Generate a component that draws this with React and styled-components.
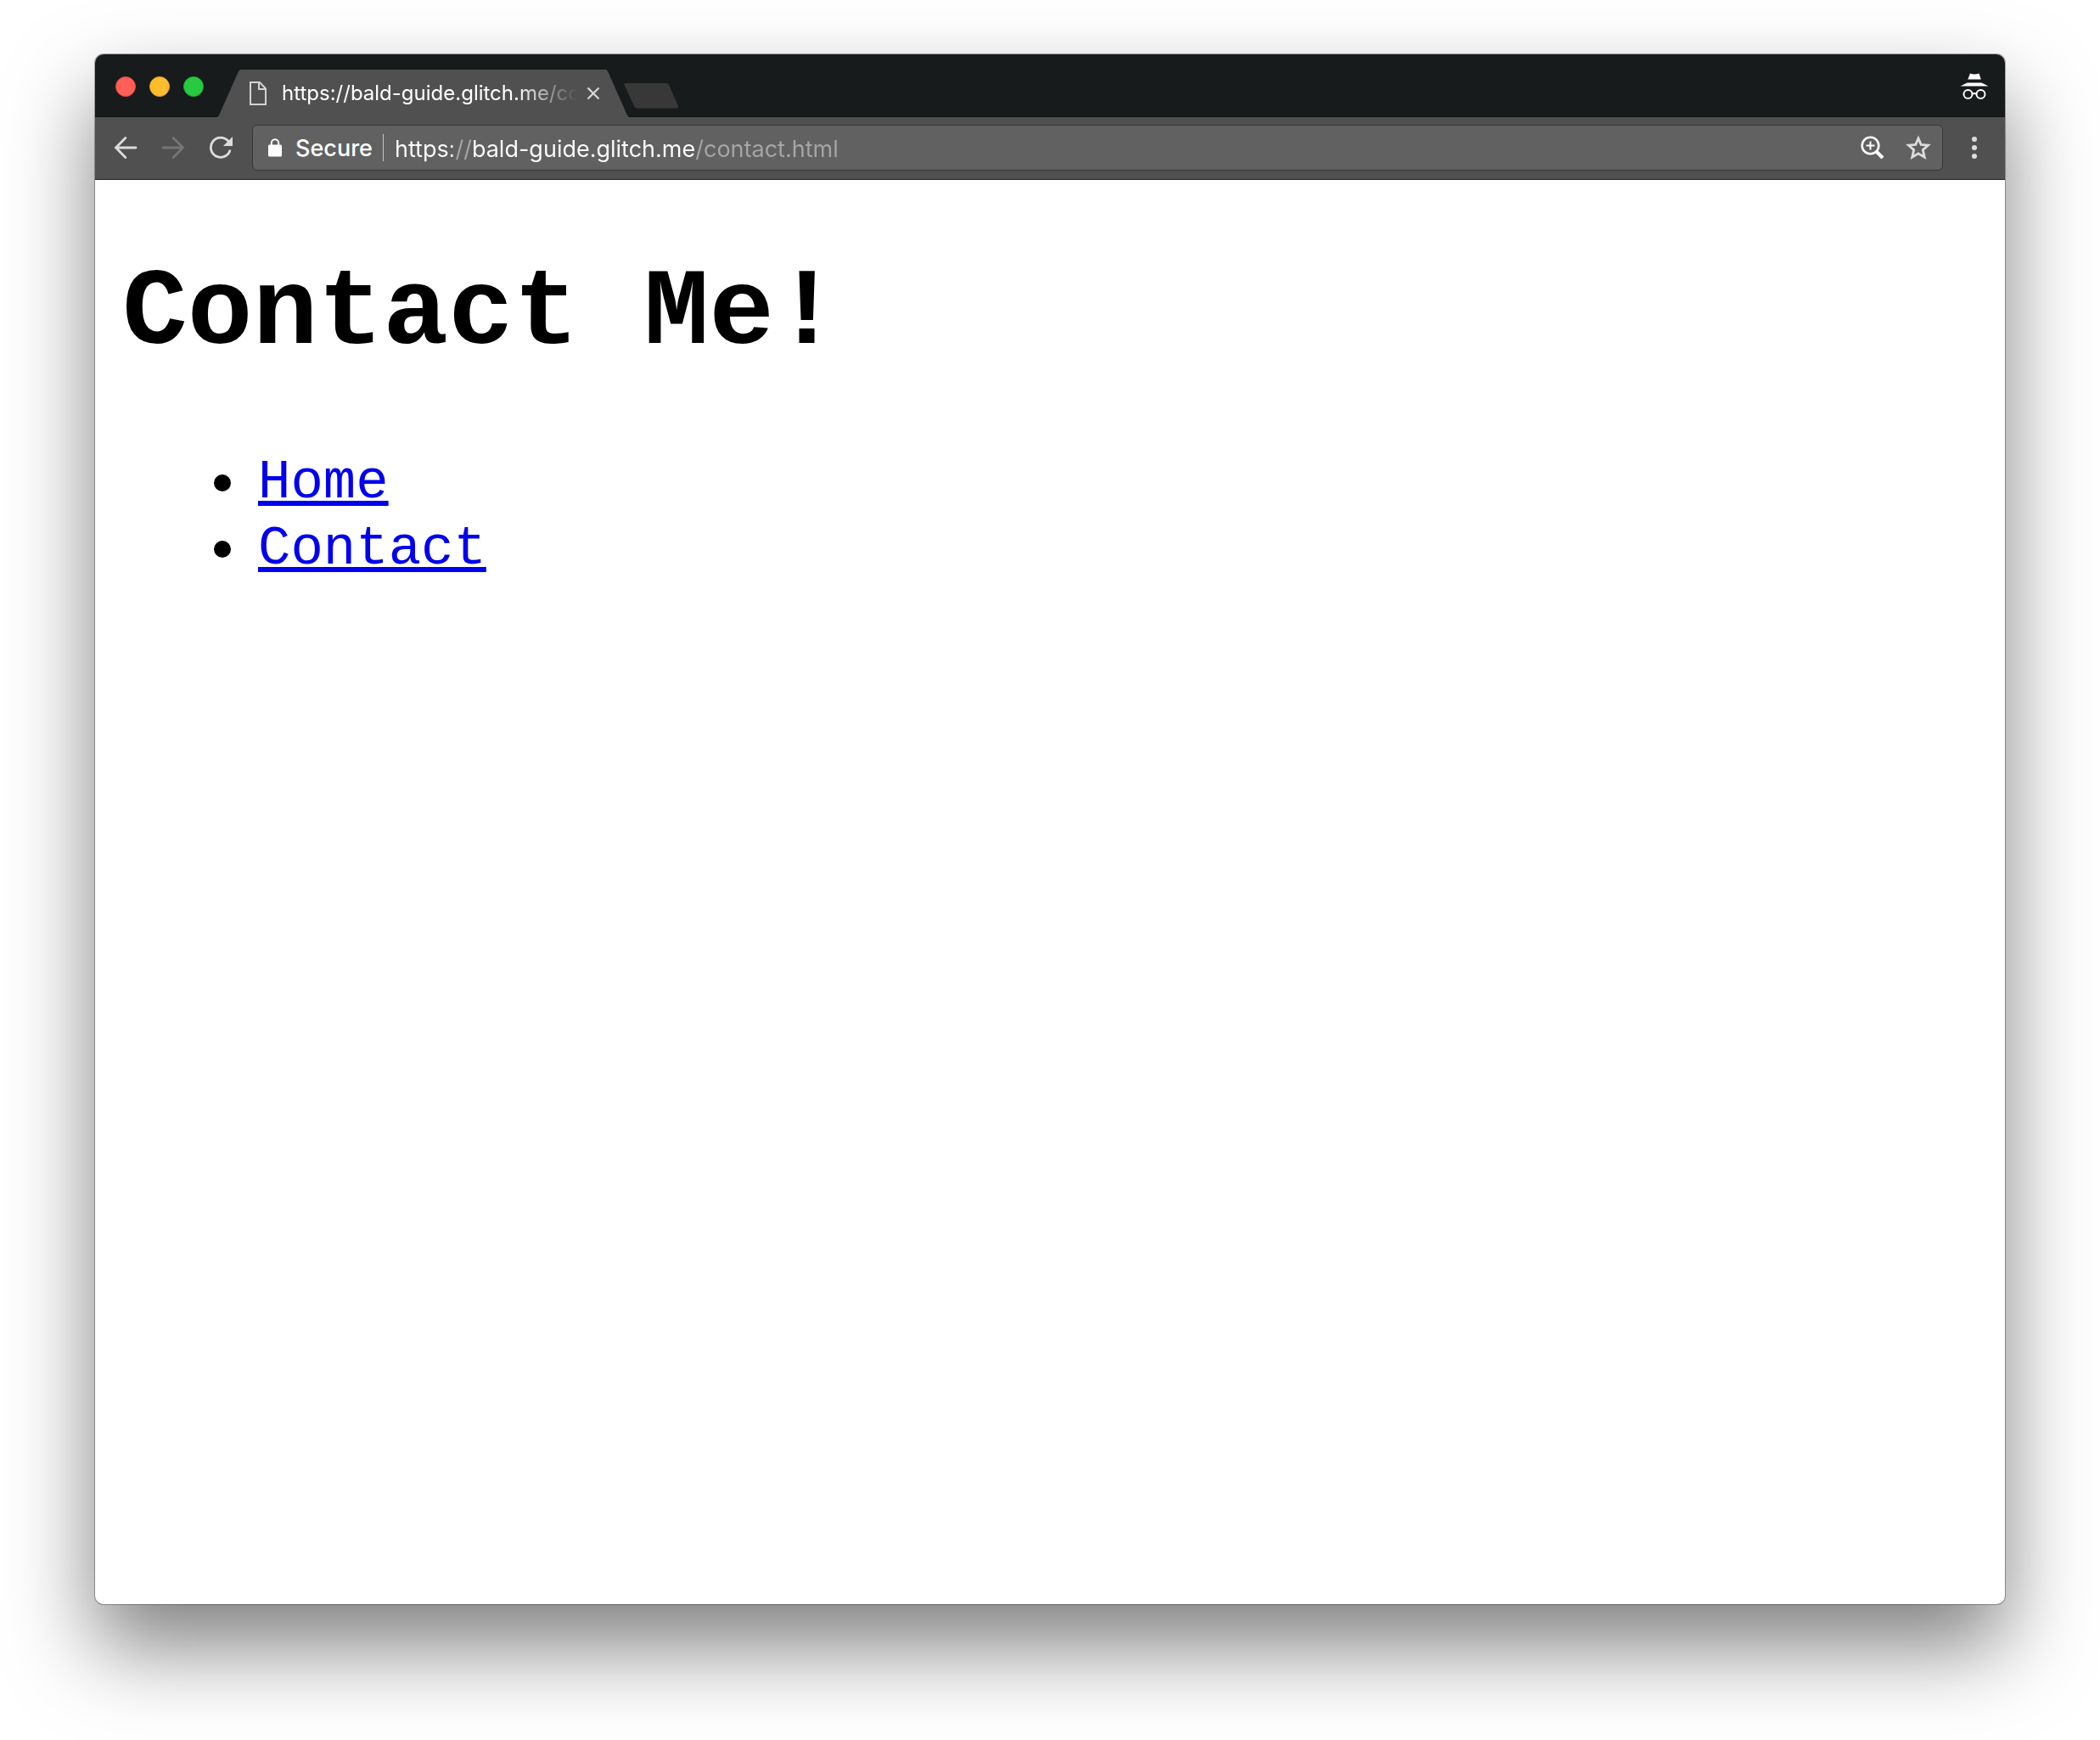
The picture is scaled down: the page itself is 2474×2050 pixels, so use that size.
import React from "react";
import styled, { createGlobalStyle } from "styled-components";

const GlobalStyle = createGlobalStyle`
  *, *::before, *::after { box-sizing: border-box; }
  body { margin: 0; background: #fff; }
`;

const uiFont = `Inter, Roboto, "Liberation Sans", sans-serif`;

const Desktop = styled.div`
  display: flex;
  min-height: 100vh;
  padding: 64px 112px 160px;
  background: #fff;
  font-family: ${uiFont};
`;

const BrowserWindow = styled.div`
  display: flex;
  flex: 1;
  flex-direction: column;
  min-width: 0;
  overflow: hidden;
  border-radius: 10px;
  background: #fff;
  box-shadow: 0 0 0 1px rgba(0, 0, 0, 0.3), 0 50px 100px rgba(0, 0, 0, 0.5);
`;

const TitleBar = styled.header`
  display: flex;
  align-items: flex-start;
  height: 74px;
  padding-right: 19px;
  background: #181b1c;
  border-bottom: 1px solid #0e1010;
`;

const WindowControls = styled.div`
  display: flex;
  gap: 16px;
  padding: 26px 28px 0 24px;
`;

const Light = styled.button`
  width: 24px;
  height: 24px;
  padding: 0;
  border: 1px solid ${(p) => p.$edge};
  border-radius: 50%;
  background: ${(p) => p.$fill};
`;

const Tab = styled.div`
  display: flex;
  align-items: center;
  width: 485px;
  height: 56px;
  margin-top: 18px;
  margin-left: -12px;
  padding: 0 32px 0 38px;
  background: #505050;
  clip-path: polygon(27px 0, calc(100% - 27px) 0, calc(100% - 25px) 2px, calc(100% - 2px) 54px, 100% 100%, 0 100%, 2px 54px, 25px 2px);
`;

const TabTitle = styled.span`
  flex: 1;
  min-width: 0;
  margin: 0 9px 0 18px;
  overflow: hidden;
  color: #fff;
  font-size: 24px;
  line-height: 32px;
  white-space: nowrap;
  mask-image: linear-gradient(to right, #000 calc(100% - 72px), transparent);
`;

const IconButton = styled.button`
  display: flex;
  align-items: center;
  justify-content: center;
  flex: none;
  width: ${(p) => p.$width || 56}px;
  height: ${(p) => p.$height || 54}px;
  padding: 0;
  border: 0;
  background: transparent;
`;

const NewTab = styled(IconButton)`
  margin: 34px auto 0 -6px;
`;

const Incognito = styled.svg`
  flex: none;
  margin-top: 22px;
`;

const Toolbar = styled.nav`
  display: flex;
  height: 74px;
  padding: 9px 8px 0;
  background: #505050;
  border-bottom: 1px solid #272727;
`;

const AddressBar = styled.div`
  display: flex;
  align-items: center;
  flex: 1;
  min-width: 0;
  height: 54px;
  margin: 0 9px;
  padding: 0 1px 0 18px;
  border: 1px solid #383838;
  border-radius: 6px;
  background: #616161;
`;

const Secure = styled.button`
  display: flex;
  align-items: center;
  gap: 16px;
  height: 32px;
  padding: 0 12px 0 0;
  border: 0;
  border-right: 1px solid #c4c4c4;
  background: transparent;
  color: #fff;
  font-family: ${uiFont};
  font-size: 27px;
  font-weight: 500;
  line-height: 32px;
`;

const SecureLabel = styled.span`
  padding-top: 2px;
`;

const Address = styled.input`
  flex: 1;
  min-width: 0;
  height: 40px;
  margin-left: 13px;
  padding: 2px 0 0;
  border: 0;
  outline: 0;
  background: linear-gradient(to right, #fff 68px, #a6a6a6 68px 92px, #fff 92px 355px, #a6a6a6 355px);
  background-clip: text;
  color: transparent;
  font-family: ${uiFont};
  font-size: 27px;
`;

const Page = styled.main`
  flex: 1;
  padding: 84px 32px;
  color: #000;
  font-family: "Courier New", "Liberation Mono", monospace;
`;

const Heading = styled.h1`
  margin: 0 0 86px;
  font-size: 128px;
  font-weight: 700;
  line-height: 148px;
`;

const Links = styled.ul`
  margin: 0;
  padding: 0 0 0 108px;
  list-style: none;
  font-size: 64px;
  line-height: 78px;
`;

const LinkItem = styled.li`
  display: flex;
  align-items: center;
  gap: 32px;

  &::before {
    content: "";
    width: 20px;
    height: 20px;
    border-radius: 50%;
    background: #000;
  }
`;

const PageLink = styled.a`
  color: #0000ee;
  text-decoration: underline;
  text-decoration-thickness: 6px;
  text-underline-offset: 4px;
  text-decoration-skip-ink: none;
`;

const lights = [
  { label: "Close window", fill: "#ff5f57", edge: "#e2463f" },
  { label: "Minimize window", fill: "#ffbd2e", edge: "#e0a028" },
  { label: "Zoom window", fill: "#28ca42", edge: "#1dad2b" },
];

const links = [
  { label: "Home", href: "#home" },
  { label: "Contact", href: "#contact" },
];

export default function App() {
  return (
    <>
      <GlobalStyle />
      <Desktop>
        <BrowserWindow>
          <TitleBar>
            <WindowControls>
              {lights.map((l) => (
                <Light key={l.label} aria-label={l.label} $fill={l.fill} $edge={l.edge} />
              ))}
            </WindowControls>
            <Tab>
              <svg width="20" height="28" viewBox="0 0 20 28" fill="none" stroke="#d2d2d2" strokeWidth="2">
                <path d="M1 1H12L19 8.5V27H1Z" />
                <path d="M11 1V9H19" />
              </svg>
              <TabTitle>https://bald-guide.glitch.me/contact.html</TabTitle>
              <IconButton $width={20} $height={28} aria-label="Close tab">
                <svg width="16" height="16" viewBox="0 0 16 16" stroke="#d8d8d8" strokeWidth="2.2">
                  <path d="M1.5 1.5 14.5 14.5M14.5 1.5 1.5 14.5" />
                </svg>
              </IconButton>
            </Tab>
            <NewTab $width={64} $height={30} aria-label="New tab">
              <svg width="64" height="30" viewBox="0 0 64 30">
                <path d="M2 0H50Q52 0 53 2L64 27Q64.500 29.500 62 29.500H16Q13 29.500 12 27L.5 2Q0 0 2 0Z" fill="#383838" />
              </svg>
            </NewTab>
            <Incognito width="34" height="32" viewBox="0 0 34 32" role="img" aria-label="Incognito">
              <path fill="#fff" d="M12 .5Q17.200 2.600 22.500 .5L24.800 7.500H9.300ZM8.500 11.500H25.500L33.500 15.500H.5Z" />
              <g fill="none" stroke="#fff" strokeWidth="2">
                <circle cx="9.500" cy="25" r="5" />
                <circle cx="24.500" cy="25" r="5" />
                <path d="M14.500 24.800Q17 23 19.500 24.800" />
              </g>
            </Incognito>
          </TitleBar>

          <Toolbar aria-label="Browser toolbar">
            <IconButton aria-label="Back">
              <svg width="28" height="28" viewBox="0 0 28 28" fill="none" stroke="#dcdcdc" strokeWidth="2.800" strokeLinecap="round">
                <path d="M2.500 14H26M13.800 2.500 2.500 14 13.800 25.500" />
              </svg>
            </IconButton>
            <IconButton aria-label="Forward" disabled>
              <svg width="28" height="28" viewBox="0 0 28 28" fill="none" stroke="#757575" strokeWidth="2.800" strokeLinecap="round">
                <path d="M25.500 14H2M14.200 2.500 25.500 14 14.200 25.500" />
              </svg>
            </IconButton>
            <IconButton aria-label="Reload">
              <svg width="28" height="28" viewBox="0 0 28 28">
                <path d="M22.800 6.200A11.600 11.600 0 1 0 24.800 17.800" fill="none" stroke="#dcdcdc" strokeWidth="2.800" strokeLinecap="round" />
                <path d="M28 1V12H17Z" fill="#dcdcdc" />
              </svg>
            </IconButton>

            <AddressBar>
              <Secure>
                <svg width="16" height="22" viewBox="0 0 16 22">
                  <path d="M3.800 9V5.500a4.200 4.200 0 0 1 8.400 0V9" fill="none" stroke="#fff" strokeWidth="2" />
                  <rect y="7.500" width="16" height="14" rx="1.500" fill="#fff" />
                </svg>
                <SecureLabel>Secure</SecureLabel>
              </Secure>
              <Address type="text" aria-label="Address" defaultValue="https://bald-guide.glitch.me/contact.html" />
              <IconButton $width={54} aria-label="Page zoom">
                <svg width="28" height="28" viewBox="0 0 28 28" fill="none" stroke="#fff">
                  <circle cx="11.500" cy="11.500" r="9.800" strokeWidth="2.600" />
                  <path d="M6.500 11.500H16.500M11.500 6.500V16.500" strokeWidth="2" />
                  <path d="M18.500 18.500 26 26" strokeWidth="4" />
                </svg>
              </IconButton>
              <IconButton $width={54} aria-label="Bookmark this page">
                <svg width="30" height="30" viewBox="0 0 30 30" fill="none" stroke="#dcdcdc" strokeWidth="2.800">
                  <path d="M15 4 18.200 11.400 26.500 12.200 20.300 17.600 22.200 26.200 15 21.800 7.800 26.200 9.700 17.600 3.500 12.200 11.800 11.400Z" />
                </svg>
              </IconButton>
            </AddressBar>

            <IconButton aria-label="Menu">
              <svg width="6" height="28" viewBox="0 0 6 28" fill="#dcdcdc">
                <circle cx="3" cy="4" r="3" />
                <circle cx="3" cy="14" r="3" />
                <circle cx="3" cy="24" r="3" />
              </svg>
            </IconButton>
          </Toolbar>

          <Page>
            <Heading>Contact Me!</Heading>
            <Links>
              {links.map((l) => (
                <LinkItem key={l.label}>
                  <PageLink href={l.href}>{l.label}</PageLink>
                </LinkItem>
              ))}
            </Links>
          </Page>
        </BrowserWindow>
      </Desktop>
    </>
  );
}
